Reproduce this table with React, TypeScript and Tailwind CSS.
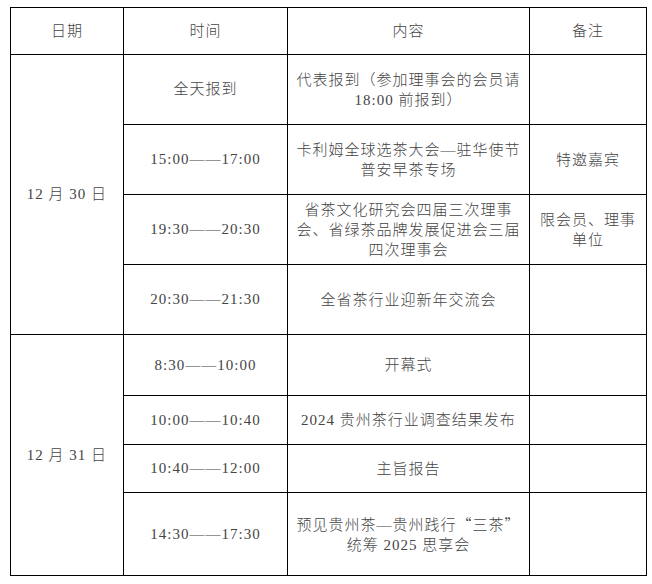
import React from 'react';

type Row = {
  time: string;
  content: React.ReactNode[];
  note?: React.ReactNode[];
  h: string;
};

// full-width quote marks, as the CJK font draws them
const Q: React.FC<{ children: string }> = ({ children }) => (
  <span style={{ fontFamily: '"Noto Sans CJK SC", sans-serif' }}>{children}</span>
);

const day30: Row[] = [
  { time: '全天报到', content: ['代表报到（参加理事会的会员请', '18:00 前报到）'], h: 'h-[70px]' },
  { time: '15:00——17:00', content: ['卡利姆全球选茶大会—驻华使节', '普安早茶专场'], note: ['特邀嘉宾'], h: 'h-[70px]' },
  {
    time: '19:30——20:30',
    content: ['省茶文化研究会四届三次理事', '会、省绿茶品牌发展促进会三届', '四次理事会'],
    note: ['限会员、理事', '单位'],
    h: 'h-[70px]',
  },
  { time: '20:30——21:30', content: ['全省茶行业迎新年交流会'], h: 'h-[70px]' },
];

const day31: Row[] = [
  { time: '8:30——10:00', content: ['开幕式'], h: 'h-[61px]' },
  { time: '10:00——10:40', content: ['2024 贵州茶行业调查结果发布'], h: 'h-[49px]' },
  { time: '10:40——12:00', content: ['主旨报告'], h: 'h-[48px]' },
  {
    time: '14:30——17:30',
    content: [
      <>
        预见贵州茶—贵州践行<Q>“</Q>三茶<Q>”</Q>
      </>,
      '统筹 2025 思享会',
    ],
    h: 'h-[83px]',
  },
];

const cell = 'border border-black text-center align-middle p-0';

const Lines: React.FC<{ lines?: React.ReactNode[] }> = ({ lines }) => (
  <>
    {lines?.map((l, i) => (
      <div key={i} className="leading-[20px] whitespace-nowrap">
        {l}
      </div>
    ))}
  </>
);

const DayBlock: React.FC<{ date: string; rows: Row[] }> = ({ date, rows }) => (
  <>
    {rows.map((r, i) => (
      <tr key={r.time} className={r.h}>
        {i === 0 && (
          <td rowSpan={rows.length} className={cell}>
            {date}
          </td>
        )}
        <td className={cell}>{r.time}</td>
        <td className={cell}>
          <Lines lines={r.content} />
        </td>
        <td className={cell}>
          <Lines lines={r.note} />
        </td>
      </tr>
    ))}
  </>
);

export default function App() {
  return (
    <div className="w-[652px] h-[584px] bg-white pt-[7px] pl-[10px]">
      <table
        className="border-collapse table-fixed w-[636px] text-[15px] font-light tracking-[1px] text-[#444]"
        style={{ fontFamily: '"Liberation Serif", "Noto Sans CJK SC", serif' }}
      >
        <colgroup>
          <col className="w-[113px]" />
          <col className="w-[164px]" />
          <col className="w-[242px]" />
          <col className="w-[117px]" />
        </colgroup>
        <thead>
          <tr className="h-[47px]">
            <th className={`${cell} font-light`}>日期</th>
            <th className={`${cell} font-light`}>时间</th>
            <th className={`${cell} font-light`}>内容</th>
            <th className={`${cell} font-light`}>备注</th>
          </tr>
        </thead>
        <tbody>
          <DayBlock date="12 月 30 日" rows={day30} />
          <DayBlock date="12 月 31 日" rows={day31} />
        </tbody>
      </table>
    </div>
  );
}
